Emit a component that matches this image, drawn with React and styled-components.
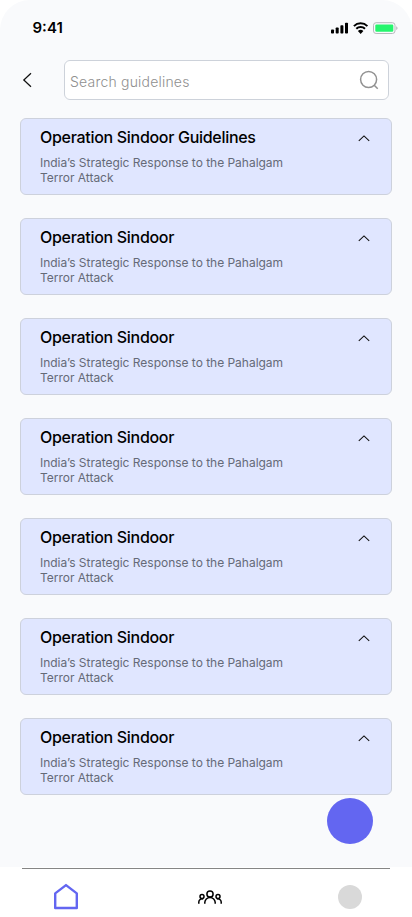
import React from "react";
import styled, { createGlobalStyle } from "styled-components";

const GlobalStyle = createGlobalStyle`
  * { box-sizing: border-box; }
  body { margin: 0; background: #fff; font-family: Inter, "Liberation Sans", sans-serif; }
  button { border: 0; padding: 0; background: none; font: inherit; color: inherit; }
  svg { display: block; }
`;

const Screen = styled.div`
  position: relative;
  display: flex;
  flex-direction: column;
  width: 412px;
  height: 917px;
  overflow: hidden;
  background: #f9fafc;
  border-radius: 30px 30px 0 0;
`;

const StatusBar = styled.header`
  display: flex;
  align-items: center;
  justify-content: space-between;
  height: 56px;
  padding: 0 14px 0 32.5px;
`;

const Time = styled.span`
  font-size: 15px;
  font-weight: 600;
  line-height: 20px;
  letter-spacing: 0;
  color: #000;
`;

const SearchRow = styled.div`
  display: flex;
  align-items: center;
  height: 40px;
  margin-top: 4px;
  padding: 0 23px 0 20px;
`;

const BackButton = styled.button`
  width: 44px;
  height: 40px;
  display: flex;
  align-items: center;
`;

const SearchField = styled.div`
  flex: 1;
  height: 40px;
  display: flex;
  align-items: center;
  justify-content: space-between;
  padding: 0 9px 0 5px;
  background: #fff;
  border: 1px solid #cdd2da;
  border-radius: 6px;
`;

const Placeholder = styled.span`
  padding-top: 4px;
  font-size: 14px;
  font-weight: 300;
  line-height: 20px;
  letter-spacing: 0.2px;
  color: #8f8f8f;
`;

const List = styled.main`
  display: flex;
  flex-direction: column;
  gap: 23px;
  padding: 18px 20px 0;
`;

const Card = styled.article`
  display: flex;
  justify-content: space-between;
  height: 77px;
  padding: 8px 21px 0 19px;
  background: #e0e6ff;
  border: 1px solid #cdd1dc;
  border-radius: 6px;
`;

const CardTitle = styled.h2`
  margin: 0;
  font-size: 16px;
  font-weight: 500;
  line-height: 20px;
  letter-spacing: -0.3px;
  color: #000;
`;

const CardText = styled.p`
  width: 260px;
  margin: 8px 0 0;
  font-size: 12px;
  font-weight: 400;
  line-height: 15px;
  letter-spacing: -0.02px;
  color: #656a78;
`;

const Toggle = styled.button`
  display: flex;
  height: 14px;
  margin-top: 7px;
`;

const FloatingButton = styled.button`
  position: absolute;
  top: 798px;
  left: 327px;
  width: 46px;
  height: 46px;
  border-radius: 50%;
  background: #6366f1;
`;

const TabBar = styled.nav`
  height: 50px;
  margin-top: auto;
  padding: 1px 22px 0;
  background: #fff;
`;

const Tabs = styled.div`
  display: grid;
  grid-template-columns: 88px 200px 80px;
  height: 49px;
  align-items: center;
  justify-items: center;
  padding-top: 8px;
  border-top: 1px solid #858585;
`;

const Avatar = styled.span`
  width: 24px;
  height: 24px;
  border-radius: 50%;
  background: #d9d9d9;
`;

const StatusIcons = () => (
  <svg width="67" height="14" viewBox="0 0 67 14" fill="none">
    <g fill="#000">
      <rect x="0" y="8.5" width="3" height="4" rx=".8" />
      <rect x="4.7" y="6.5" width="3" height="6" rx=".8" />
      <rect x="9.4" y="4.2" width="3" height="8.3" rx=".8" />
      <rect x="14" y="1.7" width="3" height="10.8" rx=".8" />
    </g>
    <path d="M22.9 5.1a9.7 9.7 0 0 1 13.5 0M25.3 7.8a6.2 6.2 0 0 1 8.7 0" stroke="#000" strokeWidth="2" />
    <path d="M26.9 10a4.1 4.1 0 0 1 5.5 0l-2.75 2.9Z" fill="#000" />
    <rect x="42.5" y="1.7" width="21.5" height="10.8" rx="2.6" stroke="#b7b9bc" />
    <rect x="44.3" y="3.5" width="18" height="7.3" rx="1.2" fill="#25f56d" />
    <path d="M65.2 5.2c1.8.7 1.8 3.1 0 3.8Z" fill="#b7b9bc" />
  </svg>
);

const BackIcon = () => (
  <svg width="14" height="18" viewBox="0 0 14 18" fill="none" stroke="#111" strokeWidth="1.25">
    <path d="M11 2.2 3.8 9l7.2 6.8" />
  </svg>
);

const SearchIcon = () => (
  <svg width="20" height="20" viewBox="0 0 20 20" fill="none" stroke="#929292" strokeWidth="1.5">
    <circle cx="9.6" cy="9.5" r="8" />
    <path d="m15.2 15.2 3.5 3.5" />
  </svg>
);

const ChevronUp = () => (
  <svg width="12" height="8" viewBox="0 0 12 8" fill="none" stroke="#111" strokeWidth="1.1">
    <path d="M.8 6.9 6 1.9l5.2 5" />
  </svg>
);

const HomeIcon = () => (
  <svg width="26" height="28" viewBox="0 0 26 28" fill="none" stroke="#6366f1" strokeWidth="2.4">
    <path d="M2.2 10.4 13 2.1l10.8 8.3V25H2.2Z" strokeLinejoin="round" />
  </svg>
);

const PeopleIcon = () => (
  <svg width="24" height="16" viewBox="0 0 24 16" fill="none" stroke="#000" strokeWidth="1.5">
    <circle cx="12" cy="5" r="3.1" />
    <circle cx="4" cy="7.6" r="2" />
    <circle cx="20" cy="7.6" r="2" />
    <path d="M6.8 14.7v-1.1a5.2 5.2 0 0 1 10.4 0v1.1M.8 14.7V13a3.2 3.2 0 0 1 4.5-2.9M23.2 14.7V13a3.2 3.2 0 0 0-4.5-2.9" />
  </svg>
);

const titles = ["Operation Sindoor Guidelines", ...Array(6).fill("Operation Sindoor")];

export default function App() {
  return (
    <>
      <GlobalStyle />
      <Screen>
        <StatusBar>
          <Time>9:41</Time>
          <StatusIcons />
        </StatusBar>
        <SearchRow>
          <BackButton aria-label="Back"><BackIcon /></BackButton>
          <SearchField>
            <Placeholder>Search guidelines</Placeholder>
            <SearchIcon />
          </SearchField>
        </SearchRow>
        <List>
          {titles.map((title, index) => (
            <Card key={index}>
              <div>
                <CardTitle>{title}</CardTitle>
                <CardText>India’s Strategic Response to the Pahalgam Terror Attack</CardText>
              </div>
              <Toggle aria-label="Collapse"><ChevronUp /></Toggle>
            </Card>
          ))}
        </List>
        <FloatingButton aria-label="New" />
        <TabBar>
          <Tabs>
            <HomeIcon />
            <PeopleIcon />
            <Avatar />
          </Tabs>
        </TabBar>
      </Screen>
    </>
  );
}
